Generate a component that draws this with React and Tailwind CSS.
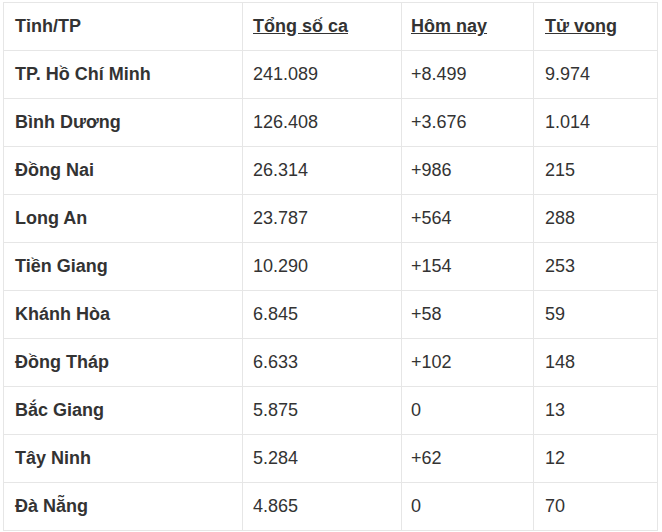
import React from 'react';

const rows = [
    ['TP. Hồ Chí Minh', '241.089', '+8.499', '9.974'],
    ['Bình Dương', '126.408', '+3.676', '1.014'],
    ['Đồng Nai', '26.314', '+986', '215'],
    ['Long An', '23.787', '+564', '288'],
    ['Tiền Giang', '10.290', '+154', '253'],
    ['Khánh Hòa', '6.845', '+58', '59'],
    ['Đồng Tháp', '6.633', '+102', '148'],
    ['Bắc Giang', '5.875', '0', '13'],
    ['Tây Ninh', '5.284', '+62', '12'],
    ['Đà Nẵng', '4.865', '0', '70'],
];

export default function App() {
    return (
        <div className="bg-white w-[662px] h-[532px] pt-[2px] pl-[3px] overflow-hidden" style={{ fontFamily: '"Liberation Sans", Arial, sans-serif' }}>
            <table className="border-collapse text-[18px] text-[#333]">
                <thead>
                    <tr className="h-[48px]">
                        <th className="w-[239px] border border-[#e6e6e6] pl-[11px] text-left font-bold">Tỉnh/TP</th>
                        <th className="w-[159px] border border-[#e6e6e6] pl-[10px] text-left font-bold underline">Tổng số ca</th>
                        <th className="w-[132px] border border-[#e6e6e6] pl-[9px] text-left font-bold underline">Hôm nay</th>
                        <th className="w-[124px] border border-[#e6e6e6] pl-[11px] text-left font-bold underline">Tử vong</th>
                    </tr>
                </thead>
                <tbody>
                    {rows.map((r) => (
                        <tr key={r[0]} className="h-[48px]">
                            <td className="border border-[#e6e6e6] pl-[11px] font-bold">{r[0]}</td>
                            <td className="border border-[#e6e6e6] pl-[10px]">{r[1]}</td>
                            <td className="border border-[#e6e6e6] pl-[9px]">{r[2]}</td>
                            <td className="border border-[#e6e6e6] pl-[11px]">{r[3]}</td>
                        </tr>
                    ))}
                </tbody>
            </table>
        </div>
    );
}
